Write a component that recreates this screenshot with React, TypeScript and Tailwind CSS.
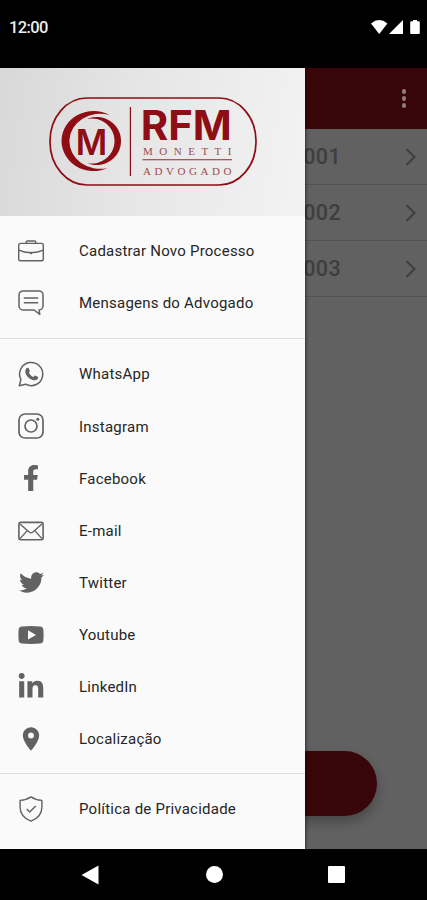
import type { ReactNode } from 'react';
import { FaFacebookF, FaLinkedinIn, FaTwitter } from 'react-icons/fa';
import { MdLocationOn } from 'react-icons/md';

interface MenuItem {
  label: string;
  icon: ReactNode;
}

const BriefcaseIcon = () => (
  <svg className="size-[28px]" viewBox="0 0 28 28" fill="none" stroke="currentColor" strokeWidth="1.4">
    <rect x="1.7" y="6.4" width="24.6" height="17.4" rx="1.8" />
    <path d="M9.3 6.4V5q0-1 1-1h7.4q1 0 1 1v1.4" />
    <path d="M1.7 13.2Q7 15.6 14 15.8Q21 15.6 26.3 13.2" />
    <path d="M12.3 15.4h3.4l-1.7 1.8z" fill="currentColor" strokeWidth="0.8" />
  </svg>
);

const MessageIcon = () => (
  <svg className="size-[28px]" viewBox="0 0 28 28" fill="none" stroke="currentColor" strokeWidth="1.5" strokeLinejoin="round">
    <path d="M6 1.9h16a4 4 0 0 1 4 4v11a4 4 0 0 1-4 4l.8 4.6-5.6-4.5H6a4 4 0 0 1-4-4V5.9a4 4 0 0 1 4-4z" />
    <path d="M6.8 9h14.4M6.8 13.8h14.4" />
  </svg>
);

const WhatsAppIcon = () => (
  <svg className="size-[28px]" viewBox="0 0 28 28" fill="none" stroke="currentColor" strokeWidth="1.5" strokeLinejoin="round">
    <path d="M3.9 19.4A11.6 11.6 0 1 1 8.6 24.2L2.3 25.7z" />
    <path
      d="M9.8 8.1c.5-.5 1.6-.4 1.9.2l1.1 2.6c.2.6-.9 1.6-.9 1.9 1 2 2.4 3.3 4.4 4.1.5.1 1.2-1.4 1.8-1.3l2.7 1.2c.7.5.2 2-.6 2.7-1.3 1.1-3.2 1-5.2.2-3.1-1.3-5.3-3.6-6.4-6.3-.6-2-.2-4.1 1.2-5.3z"
      fill="currentColor"
      stroke="none"
    />
  </svg>
);

const InstagramIcon = () => (
  <svg className="size-[28px]" viewBox="0 0 28 28" fill="none" stroke="currentColor" strokeWidth="1.7">
    <rect x="2" y="2" width="24" height="24" rx="6" />
    <circle cx="14" cy="14" r="6" />
    <circle cx="20.8" cy="7.3" r="1.5" fill="currentColor" stroke="none" />
  </svg>
);

const MailIcon = () => (
  <svg className="size-[28px]" viewBox="0 0 28 28" fill="none" stroke="currentColor" strokeWidth="1.4">
    <rect x="1.9" y="5.4" width="24.2" height="17.4" rx="1.7" strokeWidth="1.6" />
    <path d="M3 7l9.4 8.2q1.6 1.3 3.2 0L25 7M3 21.6l7.2-8M25 21.6l-7.2-8" />
  </svg>
);

const YoutubeIcon = () => (
  <svg className="size-[28px]" viewBox="0 0 28 28">
    <path
      fillRule="evenodd"
      fill="currentColor"
      d="M5 5.5Q14 4.7 23 5.5Q26.2 5.8 26.4 9Q26.8 14 26.4 19Q26.2 22.2 23 22.5Q14 23.3 5 22.5Q1.8 22.2 1.6 19Q1.2 14 1.6 9Q1.8 5.8 5 5.5zM11 9.2v9.4l8-4.7z"
    />
  </svg>
);

const ShieldIcon = () => (
  <svg className="size-[28px]" viewBox="0 0 28 28" fill="none" stroke="currentColor" strokeWidth="1.4" strokeLinejoin="round">
    <path d="M14 1.9Q18.5 5 24.9 5.4V12Q24.9 22 14 26.2Q3.1 22 3.1 12V5.4Q9.5 5 14 1.9z" />
    <path d="M9.7 14.1l3 3 6-6.2" />
  </svg>
);

const GROUPS: MenuItem[][] = [
  [
    { label: 'Cadastrar Novo Processo', icon: <BriefcaseIcon /> },
    { label: 'Mensagens do Advogado', icon: <MessageIcon /> },
  ],
  [
    { label: 'WhatsApp', icon: <WhatsAppIcon /> },
    { label: 'Instagram', icon: <InstagramIcon /> },
    { label: 'Facebook', icon: <FaFacebookF size={26} /> },
    { label: 'E-mail', icon: <MailIcon /> },
    { label: 'Twitter', icon: <FaTwitter size={25} /> },
    { label: 'Youtube', icon: <YoutubeIcon /> },
    { label: 'LinkedIn', icon: <FaLinkedinIn size={28} /> },
    { label: 'Localização', icon: <MdLocationOn size={30} /> },
  ],
  [{ label: 'Política de Privacidade', icon: <ShieldIcon /> }],
];

const PROCESSOS = ['001', '002', '003'];

function Logo() {
  return (
    <svg width="210" height="92" viewBox="47.5 96.5 210 92" fill="#8f0d14">
      <rect x="49.5" y="98.5" width="206" height="87" rx="37" ry="43" fill="none" stroke="#8f0d14" strokeWidth="1.7" />
      {/* Crescentes em volta do M */}
      <path d="M109 115.500A32 30 0 1 0 107 168.500A30.600 27.600 0 1 1 109 115.500z" />
      <path d="M86.500 119.500A24.300 24 0 1 1 86.500 163.500A22.800 22.500 0 1 0 86.500 119.500z" />
      <text x="75.3" y="155.2" fontFamily="Inter, sans-serif" fontWeight="600" fontSize="36" textLength="31.5" lengthAdjust="spacingAndGlyphs">M</text>
      <rect x="129.3" y="107.5" width="1.2" height="69" />
      <text x="140.3" y="140.7" fontFamily="Inter, sans-serif" fontWeight="700" fontSize="40.5" textLength="91" lengthAdjust="spacingAndGlyphs">RFM</text>
      <g fill="#a04a4f" fontFamily="'Liberation Serif', serif" fontSize="11">
        <text x="142.5" y="155" textLength="88.5">MONETTI</text>
        <rect x="142" y="159.6" width="89.5" height="1.2" />
        <text x="142.5" y="175" textLength="88.5">ADVOGADO</text>
      </g>
    </svg>
  );
}

function StatusBar() {
  return (
    <div className="flex h-[68px] items-start justify-between bg-black pt-[17px] pr-[7px] pl-[9px] text-white">
      <span className="text-[16.5px] leading-[22px] font-medium tracking-[-0.6px] text-[#ececec]">12:00</span>
      <div className="mt-[3px] flex">
        <svg width="17" height="14" viewBox="0 0 17 14" fill="currentColor">
          <path d="M0 3.5Q8.2-3.3 16.4 3.5L8.2 14z" />
        </svg>
        <svg className="ml-px" width="14" height="14" viewBox="0 0 14 14" fill="currentColor">
          <path d="M14 0v14H0z" />
        </svg>
        <svg className="ml-[7px]" width="10" height="14" viewBox="0 0 10 14" fill="currentColor">
          <path d="M3 0h4v1.3h1.8q1 0 1 1V13q0 1-1 1H1.2q-1 0-1-1V2.3q0-1 1-1H3z" />
        </svg>
      </div>
    </div>
  );
}

function Drawer() {
  return (
    <aside className="absolute inset-y-0 left-0 w-[305px] bg-[#fafafa] shadow-[1px_0_3px_rgba(0,0,0,0.5)]">
      <div className="flex h-[148px] items-center justify-center bg-[linear-gradient(100deg,#d8d8d8_0%,#e6e6e6_45%,#f3f3f3_100%)]">
        <Logo />
      </div>
      {GROUPS.map((group, i) => (
        <ul key={i} className={i === 0 ? 'py-[9px]' : 'border-t border-[#dedede] pt-[9px] pb-2'}>
          {group.map((item) => (
            <li key={item.label} className="flex h-[52.1px] items-center">
              <span className="ml-[17px] flex w-[28px] justify-center text-[#626262]">{item.icon}</span>
              <span className="ml-[34px] pt-px text-[15px] tracking-[0.23px] text-[#262626]">{item.label}</span>
            </li>
          ))}
        </ul>
      ))}
    </aside>
  );
}

function NavBar() {
  return (
    <div className="flex h-[51px] items-center bg-black pl-[81px] text-white">
      <svg width="18" height="20" viewBox="0 0 18 20" fill="currentColor">
        <path d="M17.5.5v19L.5 10z" />
      </svg>
      <div className="ml-[107px] size-[17px] rounded-full bg-white" />
      <div className="ml-[105px] size-[17px] rounded-[1px] bg-white" />
    </div>
  );
}

export default function App() {
  return (
    <div className="flex h-[900px] w-[427px] flex-col overflow-hidden bg-black font-['Roboto',sans-serif]">
      <StatusBar />
      <main className="relative flex h-[781px] flex-col overflow-hidden bg-[#616161]">
        <header className="flex h-[60.5px] items-center justify-end bg-[#380509] pr-[21px]">
          <div className="flex flex-col gap-[2.5px]">
            <i className="size-[4.5px] rounded-full bg-[#8e7c7c]" />
            <i className="size-[4.5px] rounded-full bg-[#8e7c7c]" />
            <i className="size-[4.5px] rounded-full bg-[#8e7c7c]" />
          </div>
        </header>
        {PROCESSOS.map((num) => (
          <div key={num} className="flex h-[56px] items-center justify-end border-b border-[#525252] pt-[2px] pr-[11px] text-[#3e3e3e]">
            <span className="text-[21.5px] font-medium tracking-[0.4px]">{num}</span>
            <svg className="ml-[64px]" width="11" height="18" viewBox="0 0 11 18" fill="none" stroke="currentColor" strokeWidth="2">
              <path d="M1.5 1l8 8-8 8" />
            </svg>
          </div>
        ))}
        <div className="mx-[50px] mt-auto mb-[33px] h-[65px] shrink-0 rounded-full bg-[#380509] shadow-[0_6px_12px_rgba(0,0,0,0.28)]" />
        <Drawer />
      </main>
      <NavBar />
    </div>
  );
}
